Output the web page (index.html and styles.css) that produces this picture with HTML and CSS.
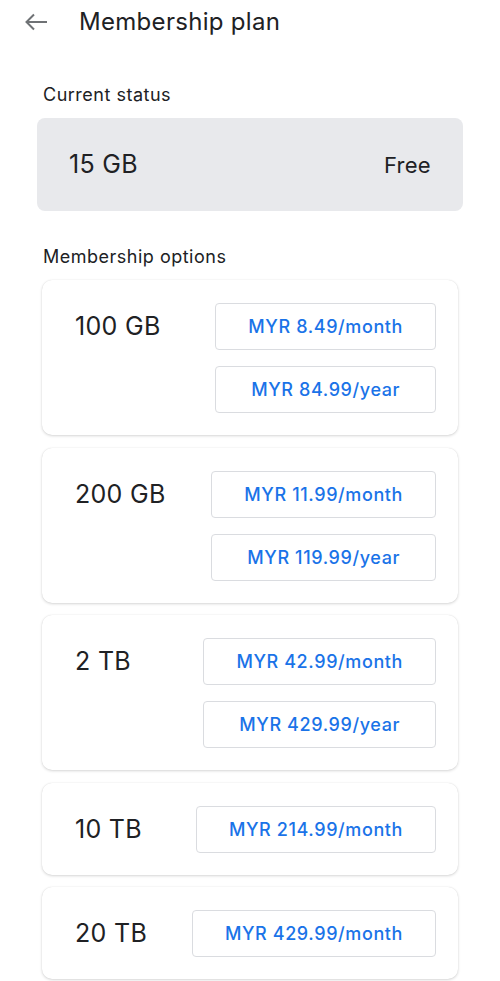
FILE: index.html
```html
<!DOCTYPE html>
<html lang="en">
<head>
    <meta charset="UTF-8">
    <meta name="viewport" content="width=device-width, initial-scale=1.0">
    <title>Membership plan</title>
    <link rel="stylesheet" href="styles.css">
</head>
<body>
    <header class="top-bar">
        <svg class="back-arrow" viewBox="0 0 24 20" width="24" height="20">
            <path d="M23 10H2.5M10 2.5L2.5 10l7.5 7.5"/>
        </svg>
        <h1 class="title">Membership plan</h1>
    </header>

    <main>
        <div class="section-label">Current status</div>
        <div class="status-card">
            <span class="plan-size">15 GB</span>
            <span class="status-price">Free</span>
        </div>

        <div class="section-label options-label">Membership options</div>

        <div class="option-card">
            <span class="plan-size">100 GB</span>
            <div class="price-buttons">
                <button class="price-btn">MYR 8.49/month</button>
                <button class="price-btn">MYR 84.99/year</button>
            </div>
        </div>

        <div class="option-card">
            <span class="plan-size">200 GB</span>
            <div class="price-buttons">
                <button class="price-btn">MYR 11.99/month</button>
                <button class="price-btn">MYR 119.99/year</button>
            </div>
        </div>

        <div class="option-card">
            <span class="plan-size">2 TB</span>
            <div class="price-buttons">
                <button class="price-btn">MYR 42.99/month</button>
                <button class="price-btn">MYR 429.99/year</button>
            </div>
        </div>

        <div class="option-card">
            <span class="plan-size">10 TB</span>
            <div class="price-buttons">
                <button class="price-btn">MYR 214.99/month</button>
            </div>
        </div>

        <div class="option-card">
            <span class="plan-size">20 TB</span>
            <div class="price-buttons">
                <button class="price-btn">MYR 429.99/month</button>
            </div>
        </div>
    </main>
</body>
</html>
```

FILE: styles.css
```css
* {
    box-sizing: border-box;
    margin: 0;
    padding: 0;
}

html, body {
    background-color: white;
    color: #202124;
    font-family: Inter, Roboto, sans-serif;
}

.top-bar {
    height: 44px;
    display: flex;
    align-items: center;
}

.back-arrow {
    fill: none;
    stroke: #6f7275;
    stroke-width: 2;
    margin-left: 24px;
    margin-right: 31px;
}

.title {
    font-size: 24px;
    font-weight: 400;
    letter-spacing: 0.3px;
    line-height: 44px;
}

.section-label {
    font-size: 18px;
    letter-spacing: 0.5px;
    line-height: 24px;
    margin: 39px 43px 11px;
}

.options-label {
    margin-top: 34px;
    margin-bottom: 11px;
}

.status-card {
    height: 93px;
    margin: 0 37px;
    padding: 0 32px;
    background-color: #e8e9ec;
    border-radius: 8px;

    display: flex;
    align-items: center;
    justify-content: space-between;
}

.status-price {
    font-size: 22px;
    letter-spacing: 0.3px;
}

.plan-size {
    font-size: 25px;
    letter-spacing: 0.3px;
    line-height: 47px;
}

.option-card {
    margin: 0 42px 12.5px;
    padding: 23px 22px 22px 33px;
    border-radius: 10px;
    background-color: white;
    box-shadow: 0 1px 3px rgba(0, 0, 0, 0.16), 0 0 1px rgba(0, 0, 0, 0.12);

    display: flex;
    justify-content: space-between;
    align-items: flex-start;
}

.price-buttons {
    display: flex;
    flex-direction: column;
    gap: 16px;
}

.price-btn {
    height: 47px;
    padding: 0 32px;
    background-color: white;
    border: 1px solid #dadce0;
    border-radius: 4px;

    color: #1a73e8;
    font-family: inherit;
    font-size: 18px;
    font-weight: 500;
    letter-spacing: 0.6px;
}
```
